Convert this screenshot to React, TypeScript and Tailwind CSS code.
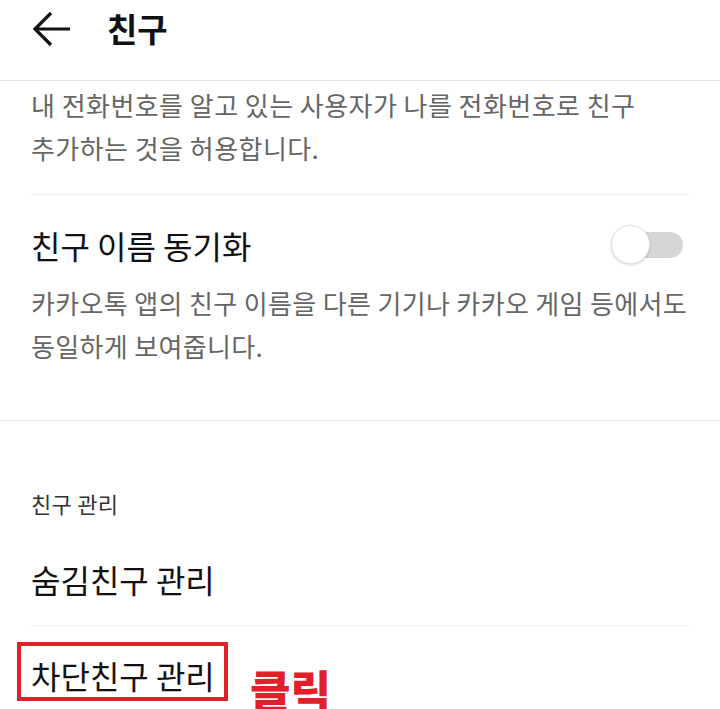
const font = "font-['Noto_Sans_CJK_KR','Noto_Sans',sans-serif]";

function BackArrow() {
  return (
    <svg width="40" height="36" viewBox="0 0 40 36" fill="none" stroke="#111" strokeWidth="3.2" strokeLinecap="butt" strokeLinejoin="miter">
      <path d="M3 18H38" />
      <path d="M19 2L3 18L19 34" />
    </svg>
  );
}

function Toggle() {
  return (
    <div className="relative h-[40px] w-[72px]">
      <div className="absolute left-[18px] top-[7px] h-[26px] w-[54px] rounded-full bg-[#d6d6d6]" />
      <div className="absolute left-0 top-0 h-[39px] w-[39px] rounded-full border border-[#e4e4e4] bg-white shadow-[0_1px_3px_rgba(0,0,0,0.18)]" />
    </div>
  );
}

export default function App() {
  return (
    <div className={`h-[709px] w-[720px] overflow-hidden bg-white ${font}`}>
      <header className="h-[81px] border-b border-[#e3e3e3]">
        <div className="flex h-[56px] items-center">
          <div className="ml-[32px] mt-[2px]">
            <BackArrow />
          </div>
          <h1 className="ml-[35px] text-[33px] font-bold leading-[40px] text-[#111]">친구</h1>
        </div>
      </header>

      <div className="px-[31px]">
        <p className="mt-[2px] text-[26px] leading-[43px] tracking-[0.45px] text-[#666]">
          내 전화번호를 알고 있는 사용자가 나를 전화번호로 친구
          <br />
          추가하는 것을 허용합니다.
        </p>

        <div className="mt-[25px] mr-[-1px] h-px bg-[#ececec]" />

        <div className="mt-[30px] flex items-center justify-between">
          <span className="text-[32px] leading-[40px] text-[#111]">친구 이름 동기화</span>
          <div className="mr-[6px]">
            <Toggle />
          </div>
        </div>

        <p className="mt-[16px] whitespace-nowrap text-[26px] leading-[43px] tracking-[0.35px] text-[#666]">
          카카오톡 앱의 친구 이름을 다른 기기나 카카오 게임 등에서도
          <br />
          동일하게 보여줍니다.
        </p>
      </div>

      <div className="mt-[53px] h-px bg-[#e3e3e3]" />

      <div className="px-[31px]">
        <div className="mt-[68px] text-[22px] leading-[28px] tracking-[0.3px] text-[#333]">친구 관리</div>

        <div className="mt-[42px] text-[32px] leading-[40px] text-[#111]">숨김친구 관리</div>

        <div className="mt-[26px] h-px bg-[#efefef]" />

        <div className="relative mt-[29px] text-[32px] leading-[40px] text-[#111]">
          차단친구 관리
          <div className="absolute left-[-14px] top-[-13px] h-[59px] w-[211px] border-[4px] border-[#e3202a]" />
          <span className="absolute left-[219px] top-[6px] text-[44px] font-black leading-[56px] text-[#e3202a]">클릭</span>
        </div>
      </div>
    </div>
  );
}
